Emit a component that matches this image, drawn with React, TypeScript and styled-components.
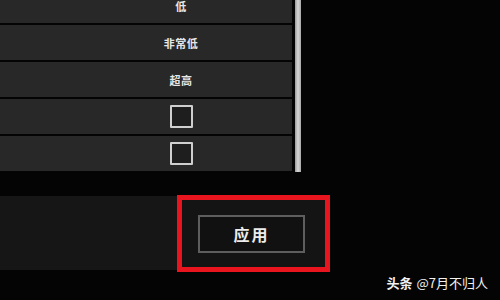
import React from "react";
import styled, { createGlobalStyle } from "styled-components";

const Global = createGlobalStyle`
  html, body { margin: 0; padding: 0; background: #040404; }
  body { font-family: "Noto Sans CJK SC", "Noto Sans", sans-serif; }
`;

const Screen = styled.div`
  position: relative;
  width: 500px;
  height: 300px;
  overflow: hidden;
  background: #040404;
  display: flex;
  flex-direction: column;
`;

const Panel = styled.div`
  display: flex;
  gap: 3px;
  height: 172px;
  overflow: hidden;
`;

const List = styled.div`
  width: 292px;
  display: flex;
  flex-direction: column;
  gap: 2px;
  margin-top: -12px;
`;

const Row = styled.div`
  height: 35px;
  flex: none;
  background: #282828;
  display: grid;
  grid-template-columns: 70px 1fr;
  align-items: center;
`;

const Value = styled.div`
  grid-column: 2;
  display: flex;
  justify-content: center;
  align-items: center;
  color: #e6e6e6;
  font-size: 11px;
  font-weight: 700;
  letter-spacing: 0.5px;
`;

const Checkbox = styled.div`
  width: 19px;
  height: 19px;
  border: 2px solid #cfcfcf;
  background: #1e1e1e;
  border-radius: 1px;
`;

const Scrollbar = styled.div`
  width: 6px;
  height: 172px;
  background: linear-gradient(90deg, #9a9a9a, #d8d8d8 50%, #a8a8a8);
`;

const Footer = styled.div`
  margin-top: 23px;
  display: flex;
  align-items: stretch;
  height: 77px;
`;

const Band = styled.div`
  width: 177px;
  background: #161616;
  margin: 1px 0 2px;
`;

const Highlight = styled.div`
  width: 143px;
  border: 5px solid #e8141e;
  background: #141414;
  display: flex;
  align-items: center;
  justify-content: center;
`;

const ApplyButton = styled.div`
  width: 103px;
  height: 34px;
  border: 2px solid #5e5e5e;
  background: #111111;
  display: flex;
  align-items: center;
  justify-content: center;
  color: #ececec;
  font-size: 16px;
  font-weight: 700;
  letter-spacing: 2px;
  margin: 1px 4px 0 0;
`;

const Watermark = styled.div`
  position: absolute;
  right: 12px;
  bottom: 8px;
  color: #f2f2f2;
  font-size: 13px;
  display: flex;
  gap: 4px;
  align-items: baseline;
`;

const Brand = styled.span`
  font-weight: 700;
`;

const rows: Array<{ text?: string; check?: boolean }> = [
  { text: "低" },
  { text: "非常低" },
  { text: "超高" },
  { check: true },
  { check: true },
];

export default function App() {
  return (
    <>
      <Global />
      <Screen>
        <Panel>
          <List>
            {rows.map((r, i) => (
              <Row key={i}>
                <Value>{r.check ? <Checkbox /> : r.text}</Value>
              </Row>
            ))}
          </List>
          <Scrollbar />
        </Panel>
        <Footer>
          <Band />
          <Highlight>
            <ApplyButton>应用</ApplyButton>
          </Highlight>
        </Footer>
        <Watermark>
          <Brand>头条</Brand>
          <span>@7月不归人</span>
        </Watermark>
      </Screen>
    </>
  );
}
